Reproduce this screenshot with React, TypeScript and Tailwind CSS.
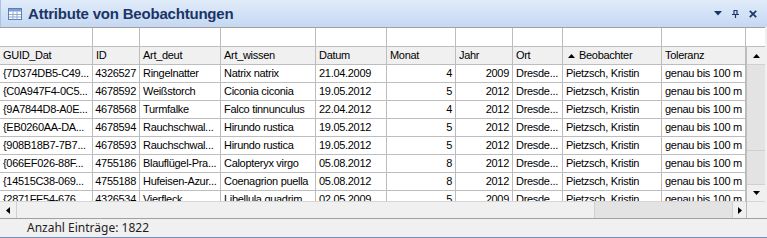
import React from 'react';

type Row = string[];

const COLS = [
  { name: 'GUID_Dat', w: 93, right: false },
  { name: 'ID', w: 47, right: true },
  { name: 'Art_deut', w: 81, right: false },
  { name: 'Art_wissen', w: 95, right: false },
  { name: 'Datum', w: 71, right: false },
  { name: 'Monat', w: 69, right: true },
  { name: 'Jahr', w: 57, right: true },
  { name: 'Ort', w: 50, right: false },
  { name: 'Beobachter', w: 99, right: false },
  { name: 'Toleranz', w: 84, right: false },
];

const ROWS: Row[] = [
  ['{7D374DB5-C49...', '4326527', 'Ringelnatter', 'Natrix natrix', '21.04.2009', '4', '2009', 'Dresde...', 'Pietzsch, Kristin', 'genau bis 100 m'],
  ['{C0A947F4-0C5...', '4678592', 'Weißstorch', 'Ciconia ciconia', '19.05.2012', '5', '2012', 'Dresde...', 'Pietzsch, Kristin', 'genau bis 100 m'],
  ['{9A7844D8-A0E...', '4678568', 'Turmfalke', 'Falco tinnunculus', '22.04.2012', '4', '2012', 'Dresde...', 'Pietzsch, Kristin', 'genau bis 100 m'],
  ['{EB0260AA-DA...', '4678594', 'Rauchschwal...', 'Hirundo rustica', '19.05.2012', '5', '2012', 'Dresde...', 'Pietzsch, Kristin', 'genau bis 100 m'],
  ['{908B18B7-7B7...', '4678593', 'Rauchschwal...', 'Hirundo rustica', '19.05.2012', '5', '2012', 'Dresde...', 'Pietzsch, Kristin', 'genau bis 100 m'],
  ['{066EF026-88F...', '4755186', 'Blauflügel-Pra...', 'Calopteryx virgo', '05.08.2012', '8', '2012', 'Dresde...', 'Pietzsch, Kristin', 'genau bis 100 m'],
  ['{14515C38-069...', '4755188', 'Hufeisen-Azur...', 'Coenagrion puella', '05.08.2012', '8', '2012', 'Dresde...', 'Pietzsch, Kristin', 'genau bis 100 m'],
  ['{2871FE54-676...', '4326534', 'Vierfleck', 'Libellula quadrim', '02.05.2009', '5', '2009', 'Dresde...', 'Pietzsch, Kristin', 'genau bis 100 m'],
];

const gridCols = 'grid grid-cols-[93px_47px_81px_95px_71px_69px_57px_50px_99px_84px]';

const TableIcon = () => (
  <svg width="14" height="12" viewBox="0 0 14 12" className="shrink-0">
    <rect x="0.5" y="0.5" width="13" height="11" fill="#ffffff" stroke="#5b7fb5" />
    <rect x="1" y="1" width="12" height="2.5" fill="#7b9fd4" />
    <path d="M1 6.5h12M1 9h12M5 3.5v8M9 3.5v8" stroke="#8fa9d0" strokeWidth="1" />
  </svg>
);

const Arrow = ({ dir }: { dir: 'up' | 'down' | 'left' | 'right' }) => {
  const pts = {
    up: '0,4 7,4 3.5,0',
    down: '0,0 7,0 3.5,4',
    left: '4,0 4,7 0,3.5',
    right: '0,0 0,7 4,3.5',
  }[dir];
  const horiz = dir === 'left' || dir === 'right';
  return (
    <svg width={horiz ? 4 : 7} height={horiz ? 7 : 4} viewBox={horiz ? '0 0 4 7' : '0 0 7 4'}>
      <polygon points={pts} fill="#000000" />
    </svg>
  );
};

const App: React.FC = () => {
  return (
    <div className="w-[767px] h-[238px] overflow-hidden bg-[#f0f0f0] flex flex-col font-['Liberation_Sans',Arial,sans-serif] text-[11px] tracking-[-0.3px] text-black">
      {/* Title bar */}
      <div className="h-[27px] shrink-0 flex items-center pl-[7px] pr-[10px] bg-gradient-to-b from-[#e1ecfa] to-[#c5d8f2] border-l border-[#a9c3e6]">
        <TableIcon />
        <span className="ml-[6px] font-bold text-[15px] tracking-[-0.2px] text-[#1b3566] leading-none">
          Attribute von Beobachtungen
        </span>
        <div className="ml-auto flex items-center gap-[10px] text-[#1b3566]">
          <svg width="8" height="5" viewBox="0 0 8 5"><polygon points="0,0 8,0 4,4.5" fill="#1b3566" /></svg>
          <svg width="7" height="8" viewBox="0 0 7 8">
            <path d="M1.5 0.5h4M2 0.5v4M5 0.5v4M0 4.5h7M3.5 4.5v3.5" stroke="#1b3566" strokeWidth="1.2" fill="none" />
          </svg>
          <svg width="8" height="8" viewBox="0 0 8 8">
            <path d="M0.8 0.8l6.4 6.4M7.2 0.8l-6.4 6.4" stroke="#1b3566" strokeWidth="1.7" />
          </svg>
        </div>
      </div>

      {/* Grid */}
      <div className="w-[765px] shrink-0 bg-white border-t border-[#a0a0a0]">
        {/* Filter row */}
        <div className="flex h-[19px] border-b border-[#bdbdbd]">
          <div className={gridCols}>
            {COLS.map((c) => (
              <div key={c.name} className="h-[18px] border-r border-[#bdbdbd]" />
            ))}
          </div>
          <div className="w-[19px]" />
        </div>

        <div className="flex">
          <div className="w-[746px] flex flex-col">
            {/* Header */}
            <div className={`${gridCols} h-[18px] bg-[#f0f0f0] border-b border-[#bdbdbd]`}>
              {COLS.map((c) => (
                <div key={c.name} className="border-r border-[#bdbdbd] px-[3px] flex items-center leading-none whitespace-nowrap overflow-hidden">
                  {c.name === 'Beobachter' && (
                    <svg width="7" height="4" viewBox="0 0 7 4" className="mr-[4px] ml-[2px]">
                      <polygon points="0,4 7,4 3.5,0" fill="#000000" />
                    </svg>
                  )}
                  {c.name}
                </div>
              ))}
            </div>

            {/* Rows */}
            <div className="h-[136px] overflow-hidden">
              {ROWS.map((r, i) => (
                <div key={i} className={`${gridCols} h-[18px]`}>
                  {r.map((v, j) => (
                    <div
                      key={j}
                      className={`min-w-0 border-r border-b border-[#bdbdbd] px-[3px] flex items-center leading-none whitespace-nowrap overflow-hidden ${COLS[j].right ? 'justify-end' : ''}`}
                    >
                      {v}
                    </div>
                  ))}
                </div>
              ))}
            </div>

            {/* Horizontal scrollbar */}
            <div className="h-[17px] flex bg-[#e3e3e3] border-t border-[#d6d6d6]">
              <div className="w-[17px] flex items-center justify-center bg-[#f0f0f0] border-r border-[#d0d0d0]">
                <Arrow dir="left" />
              </div>
              <div className="w-[578px] bg-[#f0f0f0] border-r border-[#d0d0d0]" />
              <div className="flex-1" />
              <div className="w-[14px] flex items-center justify-center bg-[#f0f0f0] border-l border-[#d0d0d0]">
                <Arrow dir="right" />
              </div>
            </div>
          </div>

          {/* Vertical scrollbar */}
          <div className="w-[19px] flex flex-col border-l border-[#bdbdbd]">
            <div className="h-[18px] flex items-center justify-center bg-[#f0f0f0] border-b border-[#d0d0d0]">
              <Arrow dir="up" />
            </div>
            <div className="h-[86px] bg-[#e3e3e3] border-b border-[#d0d0d0]" />
            <div className="h-[33px] bg-[#e3e3e3]" />
            <div className="h-[17px] flex items-center justify-center bg-[#f0f0f0] border-t border-[#d0d0d0]">
              <Arrow dir="down" />
            </div>
            <div className="h-[17px] bg-[#f0f0f0] border-t border-[#d6d6d6]" />
          </div>
        </div>
      </div>

      {/* Status bar */}
      <div className="flex-1 flex items-center pl-[27px] border-t border-[#a0a0a0] text-[12px] tracking-normal text-[#1e1e1e] font-['Noto_Sans',sans-serif]">
        Anzahl Einträge: 1822
      </div>
      <div className="h-[1px] bg-[#6f93c7] shrink-0" />
    </div>
  );
};

export default App;
